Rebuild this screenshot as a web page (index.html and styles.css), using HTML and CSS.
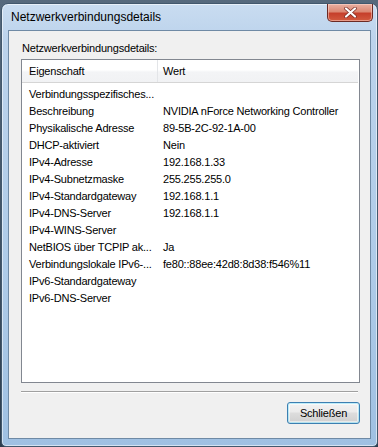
FILE: index.html
```html
<!DOCTYPE html>
<html lang="de">
<head>
    <meta charset="UTF-8">
    <title>Netzwerkverbindungsdetails</title>
    <link rel="stylesheet" href="styles.css">
</head>
<body>
    <div class="window">
        <div class="titlebar">
            <span class="title">Netzwerkverbindungsdetails</span>
            <button class="close-btn" aria-label="Schließen">
                <svg width="13" height="11" viewBox="0 0 13 11">
                    <path d="M2 1.5 L11 9.5 M11 1.5 L2 9.5" stroke="#7a2a22" stroke-width="3.6" stroke-linecap="round"/>
                    <path d="M2 1.5 L11 9.5 M11 1.5 L2 9.5" stroke="#ffffff" stroke-width="2.2" stroke-linecap="round"/>
                </svg>
            </button>
        </div>

        <div class="client">
            <div class="group-label">Netzwerkverbindungsdetails:</div>

            <div class="listview">
                <div class="list-header">
                    <div class="col col-name">Eigenschaft</div>
                    <div class="col col-value">Wert</div>
                </div>
                <div class="list-body">
                    <div class="row"><div class="col col-name">Verbindungsspezifisches...</div><div class="col col-value"></div></div>
                    <div class="row"><div class="col col-name">Beschreibung</div><div class="col col-value">NVIDIA nForce Networking Controller</div></div>
                    <div class="row"><div class="col col-name">Physikalische Adresse</div><div class="col col-value">89-5B-2C-92-1A-00</div></div>
                    <div class="row"><div class="col col-name">DHCP-aktiviert</div><div class="col col-value">Nein</div></div>
                    <div class="row"><div class="col col-name">IPv4-Adresse</div><div class="col col-value">192.168.1.33</div></div>
                    <div class="row"><div class="col col-name">IPv4-Subnetzmaske</div><div class="col col-value">255.255.255.0</div></div>
                    <div class="row"><div class="col col-name">IPv4-Standardgateway</div><div class="col col-value">192.168.1.1</div></div>
                    <div class="row"><div class="col col-name">IPv4-DNS-Server</div><div class="col col-value">192.168.1.1</div></div>
                    <div class="row"><div class="col col-name">IPv4-WINS-Server</div><div class="col col-value"></div></div>
                    <div class="row"><div class="col col-name">NetBIOS über TCPIP ak...</div><div class="col col-value">Ja</div></div>
                    <div class="row"><div class="col col-name">Verbindungslokale IPv6-...</div><div class="col col-value">fe80::88ee:42d8:8d38:f546%11</div></div>
                    <div class="row"><div class="col col-name">IPv6-Standardgateway</div><div class="col col-value"></div></div>
                    <div class="row"><div class="col col-name">IPv6-DNS-Server</div><div class="col col-value"></div></div>
                </div>
            </div>

            <div class="separator"></div>

            <div class="actions">
                <button class="btn">Schließen</button>
            </div>
        </div>
    </div>
</body>
</html>
```

FILE: styles.css
```css
/* General reset */
* {
    box-sizing: border-box;
    margin: 0;
    padding: 0;
}

body {
    width: 378px;
    height: 447px;
    overflow: hidden;
    background: linear-gradient(to bottom, #56697c, #2d3d4d);
    font-family: 'Liberation Sans', Arial, sans-serif;
    font-size: 11px;
    letter-spacing: -0.2px;
    color: #000;
    padding: 3px 0 0 1px;
}

/* Aero window frame */
.window {
    width: 377px;
    height: 444px;
    border: 1px solid #42586d;
    border-radius: 7px 7px 5px 5px;
    background: linear-gradient(to bottom, #c9dcf0 0%, #bcd3ec 8%, #aecbe8 60%, #9fc0e2 100%);
    padding: 0 6px 7px 6px;
    display: flex;
    flex-direction: column;
    box-shadow: inset 0 0 0 1px rgba(255, 255, 255, 0.55);
}

.titlebar {
    height: 27px;
    display: flex;
    justify-content: space-between;
    align-items: flex-start;
    margin: 0 -6px 0 -6px;
}

.title {
    padding: 5px 0 0 9px;
    line-height: 16px;
    font-size: 12px;
    letter-spacing: 0;
    color: #000;
}

.close-btn {
    width: 46px;
    height: 18px;
    border: 1px solid #6b2a24;
    border-top: none;
    border-radius: 0 0 5px 5px;
    background: linear-gradient(to bottom, #eab0a2 0%, #dc8873 45%, #c63f2b 55%, #d25b3f 100%);
    box-shadow: inset 0 0 0 1px rgba(255, 220, 210, 0.5);
    display: flex;
    align-items: center;
    justify-content: center;
    margin-right: 4px;
}

/* Client area */
.client {
    flex: 1;
    background-color: #f0f0f0;
    border: 1px solid #6f8aa5;
    display: flex;
    flex-direction: column;
    padding: 0 10px 14px 12px;
}

.group-label {
    margin: 10px 0 0 1px;
    line-height: 15px;
}

.listview {
    margin-top: 3px;
    height: 324px;
    border: 1px solid #828790;
    background-color: #fff;
}

.list-header {
    display: flex;
    height: 23px;
    background: linear-gradient(to bottom, #ffffff 0%, #ffffff 45%, #f3f4f6 55%, #f1f2f4 100%);
    border-bottom: 1px solid #d5d5d5;
    margin-right: 1px;
}

.list-header .col {
    line-height: 22px;
}

.list-header .col-name {
    border-right: 1px solid #e3e5e8;
}

.col-name {
    width: 136px;
    padding-left: 7px;
    white-space: nowrap;
    overflow: hidden;
}

.col-value {
    flex: 1;
    padding-left: 5px;
    white-space: nowrap;
    overflow: hidden;
}

.list-body {
    padding-top: 3px;
}

.row {
    display: flex;
    height: 17px;
    line-height: 17px;
}

.separator {
    margin: 8px 2px 0 0;
    border-top: 1px solid #a0a0a0;
    border-bottom: 1px solid #ffffff;
}

.actions {
    margin-top: 9px;
    display: flex;
    justify-content: flex-end;
}

.btn {
    width: 73px;
    height: 22px;
    font-family: 'Liberation Sans', Arial, sans-serif;
    font-size: 11px;
    letter-spacing: -0.2px;
    color: #000;
    border: 1px solid #3c7fb1;
    border-radius: 3px;
    background: linear-gradient(to bottom, #f2f2f2 0%, #ebebeb 45%, #dddddd 50%, #cfcfcf 100%);
    box-shadow: inset 0 0 0 1px #48d5fb55, inset 0 0 0 2px #ffffff88;
}
```
